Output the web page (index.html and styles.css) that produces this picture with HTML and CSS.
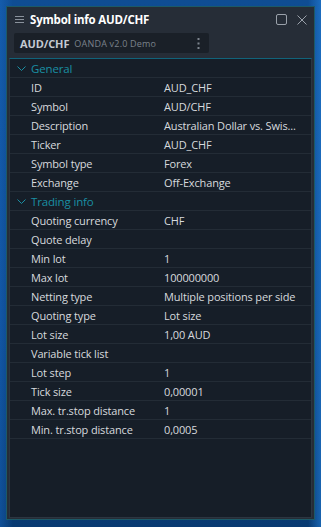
FILE: index.html
```html
<!DOCTYPE html>
<html>
<head>
<meta charset="utf-8">
<link rel="stylesheet" href="styles.css">
</head>
<body>
<div class="window">
  <div class="titlebar">
    <svg class="menu" width="9" height="7" viewBox="0 0 9 7"><path d="M0 0.5H9M0 3.5H9M0 6.5H9" stroke="#8a929c" stroke-width="1"/></svg>
    <span class="title">Symbol info AUD/CHF</span>
    <span class="spacer"></span>
    <svg class="btn" width="11" height="11" viewBox="0 0 11 11"><rect x="0.5" y="0.5" width="10" height="10" rx="1.5" fill="none" stroke="#9aa1aa"/></svg>
    <svg class="btn close" width="10" height="10" viewBox="0 0 10 10"><path d="M0.5 0.5L9.5 9.5M9.5 0.5L0.5 9.5" stroke="#9aa1aa" stroke-width="1"/></svg>
  </div>
  <div class="tabbar">
    <div class="tab">
      <span class="tab-sym">AUD/CHF</span>
      <span class="tab-broker">OANDA v2.0 Demo</span>
      <span class="spacer"></span>
      <svg class="kebab" width="3" height="11" viewBox="0 0 3 11"><rect x="0.5" y="0" width="2" height="2" fill="#7d848d"/><rect x="0.5" y="4.5" width="2" height="2" fill="#7d848d"/><rect x="0.5" y="9" width="2" height="2" fill="#7d848d"/></svg>
    </div>
  </div>
  <div class="panel">
    <div class="row section"><svg class="chev" width="9" height="5" viewBox="0 0 9 5"><path d="M0.5 0.5L4.5 4.5L8.5 0.5" fill="none" stroke="#1a8fa3" stroke-width="1"/></svg><span>General</span></div>
    <div class="row"><span class="k">ID</span><span class="v">AUD_CHF</span></div>
    <div class="row"><span class="k">Symbol</span><span class="v">AUD/CHF</span></div>
    <div class="row"><span class="k">Description</span><span class="v">Australian Dollar vs. Swis...</span></div>
    <div class="row"><span class="k">Ticker</span><span class="v">AUD_CHF</span></div>
    <div class="row"><span class="k">Symbol type</span><span class="v">Forex</span></div>
    <div class="row"><span class="k">Exchange</span><span class="v">Off-Exchange</span></div>
    <div class="row section"><svg class="chev" width="9" height="5" viewBox="0 0 9 5"><path d="M0.5 0.5L4.5 4.5L8.5 0.5" fill="none" stroke="#1a8fa3" stroke-width="1"/></svg><span>Trading info</span></div>
    <div class="row"><span class="k">Quoting currency</span><span class="v">CHF</span></div>
    <div class="row"><span class="k">Quote delay</span><span class="v"></span></div>
    <div class="row"><span class="k">Min lot</span><span class="v">1</span></div>
    <div class="row"><span class="k">Max lot</span><span class="v">100000000</span></div>
    <div class="row"><span class="k">Netting type</span><span class="v">Multiple positions per side</span></div>
    <div class="row"><span class="k">Quoting type</span><span class="v">Lot size</span></div>
    <div class="row"><span class="k">Lot size</span><span class="v">1,00 AUD</span></div>
    <div class="row"><span class="k">Variable tick list</span><span class="v"></span></div>
    <div class="row"><span class="k">Lot step</span><span class="v">1</span></div>
    <div class="row"><span class="k">Tick size</span><span class="v">0,00001</span></div>
    <div class="row"><span class="k">Max. tr.stop distance</span><span class="v">1</span></div>
    <div class="row"><span class="k">Min. tr.stop distance</span><span class="v">0,0005</span></div>
  </div>
</div>
</body>
</html>
```
FILE: styles.css
```css
html, body {
  margin: 0;
  padding: 0;
}
body {
  width: 321px;
  height: 527px;
  overflow: hidden;
  background:
    linear-gradient(90deg, rgba(30,120,220,0.35) 0%, rgba(0,0,0,0) 4%, rgba(0,0,0,0) 96%, rgba(40,140,235,0.5) 100%),
    linear-gradient(180deg, #0f4d93 0%, #0c4588 60%, #083a72 100%);
  font-family: "Open Sans", "Noto Sans", sans-serif;
}
.window {
  margin: 6px 0 0 6px;
  width: 307px;
  height: 512px;
  border: 1px solid #1c5a68;
  background: #262d37;
  display: flex;
  flex-direction: column;
  box-sizing: content-box;
}
.titlebar {
  height: 25px;
  display: flex;
  align-items: center;
  padding: 0 7px 0 8px;
}
.menu {
  margin-right: 6px;
}
.title {
  color: #ffffff;
  font-weight: 700;
  font-size: 11.5px;
  letter-spacing: -0.2px;
}
.spacer {
  flex: 1;
}
.btn {
  margin-left: 10px;
}
.tabbar {
  padding: 1px 0 0 7px;
  height: 25px;
}
.tab {
  width: 195px;
  height: 20px;
  background: #1a2028;
  border-radius: 2px;
  display: flex;
  align-items: center;
  padding: 0 8px 0 6px;
  box-sizing: border-box;
}
.tab-sym {
  color: #c5cad1;
  font-weight: 700;
  font-size: 11px;
  margin-right: 5px;
  letter-spacing: -0.1px;
}
.tab-broker {
  color: #7b828b;
  font-size: 9px;
  letter-spacing: 0.2px;
}
.kebab {
  margin-right: 1px;
}
.panel {
  flex: 1;
  margin: 0 2px 1px 2px;
  background: #161e28;
  border-top: 1px solid #11637a;
  border-left: 1px solid #2c3641;
  border-right: 1px solid #2c3641;
  border-bottom: 1px solid #2c3641;
}
.row {
  height: 18px;
  border-bottom: 1px solid #232c36;
  display: flex;
  align-items: center;
  font-size: 11px;
  letter-spacing: -0.15px;
  color: #d6dade;
}
.row .k {
  width: 133px;
  padding-left: 21px;
}
.row .v {
  flex: 1;
}
.row.section {
  color: #1a8fa3;
  font-size: 11.5px;
}
.chev {
  margin: 0 5px 0 7px;
}
```
